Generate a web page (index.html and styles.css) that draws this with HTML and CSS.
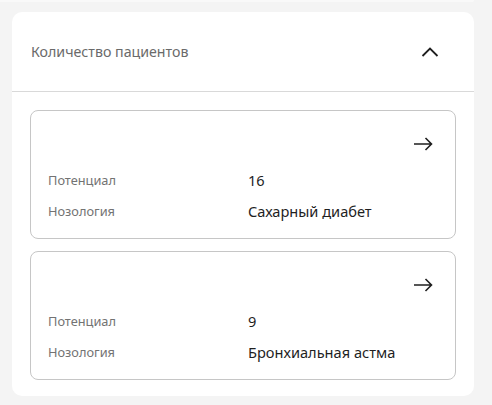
FILE: index.html
```html
<!DOCTYPE html>
<html lang="ru">
<head>
  <meta charset="UTF-8" />
  <meta name="viewport" content="width=device-width, initial-scale=1.0" />
  <title>Количество пациентов</title>
  <link rel="stylesheet" href="styles.css">
</head>
<body>

  <div class="prev-edge"></div>

  <section class="panel">
    <div class="panel-header">
      <div class="panel-title">Количество пациентов</div>
      <svg class="chevron" width="24" height="24" viewBox="0 0 24 24">
        <path d="M4.5 16 L12 8.5 L19.5 16" fill="none" stroke="#1f1f1f" stroke-width="1.8" />
      </svg>
    </div>

    <div class="panel-body">
      <div class="card">
        <div class="card-top">
          <svg class="arrow" width="24" height="24" viewBox="0 0 24 24">
            <path d="M3 12 H20.5 M14.5 6 L20.5 12 L14.5 18" fill="none" stroke="#1f1f1f" stroke-width="1.6" />
          </svg>
        </div>
        <div class="row">
          <div class="label">Потенциал</div>
          <div class="value">16</div>
        </div>
        <div class="row">
          <div class="label">Нозология</div>
          <div class="value">Сахарный диабет</div>
        </div>
      </div>

      <div class="card">
        <div class="card-top">
          <svg class="arrow" width="24" height="24" viewBox="0 0 24 24">
            <path d="M3 12 H20.5 M14.5 6 L20.5 12 L14.5 18" fill="none" stroke="#1f1f1f" stroke-width="1.6" />
          </svg>
        </div>
        <div class="row">
          <div class="label">Потенциал</div>
          <div class="value">9</div>
        </div>
        <div class="row">
          <div class="label">Нозология</div>
          <div class="value">Бронхиальная астма</div>
        </div>
      </div>
    </div>
  </section>

</body>
</html>
```

FILE: styles.css
```css
body {
  margin: 0;
  padding: 0;
  background-color: #f4f4f4;
  font-family: 'Noto Sans', 'Open Sans', sans-serif;
  overflow: hidden;
}

.prev-edge {
  width: 474px;
  height: 2px;
  background-color: #f9f9f9;
  border-radius: 0 0 10px 0;
}

.panel {
  margin: 10px 18px 0 12px;
  background-color: white;
  border-radius: 10px;
  padding-bottom: 16px;
}

.panel-header {
  display: flex;
  align-items: center;
  justify-content: space-between;
  height: 79px;
  padding: 0 32px 0 19px;
  border-bottom: 1px solid #d9d9d9;
}

.panel-title {
  font-size: 14.2px;
  color: #6a6a6a;
}

.chevron {
  display: block;
}

.panel-body {
  display: flex;
  flex-direction: column;
  gap: 12px;
  padding: 18px 18px 0 18px;
}

.card {
  border: 1px solid #c6c6c6;
  border-radius: 8px;
  padding: 21px 20px 16px 17px;
}

.card-top {
  display: flex;
  justify-content: flex-end;
  margin-bottom: 13px;
}

.arrow {
  display: block;
}

.row {
  display: grid;
  grid-template-columns: 200px 1fr;
  align-items: center;
  height: 22px;
}

.row + .row {
  margin-top: 9px;
}

.label {
  font-size: 12.8px;
  color: #737373;
}

.value {
  font-size: 14.6px;
  color: #1f1f1f;
}
```
